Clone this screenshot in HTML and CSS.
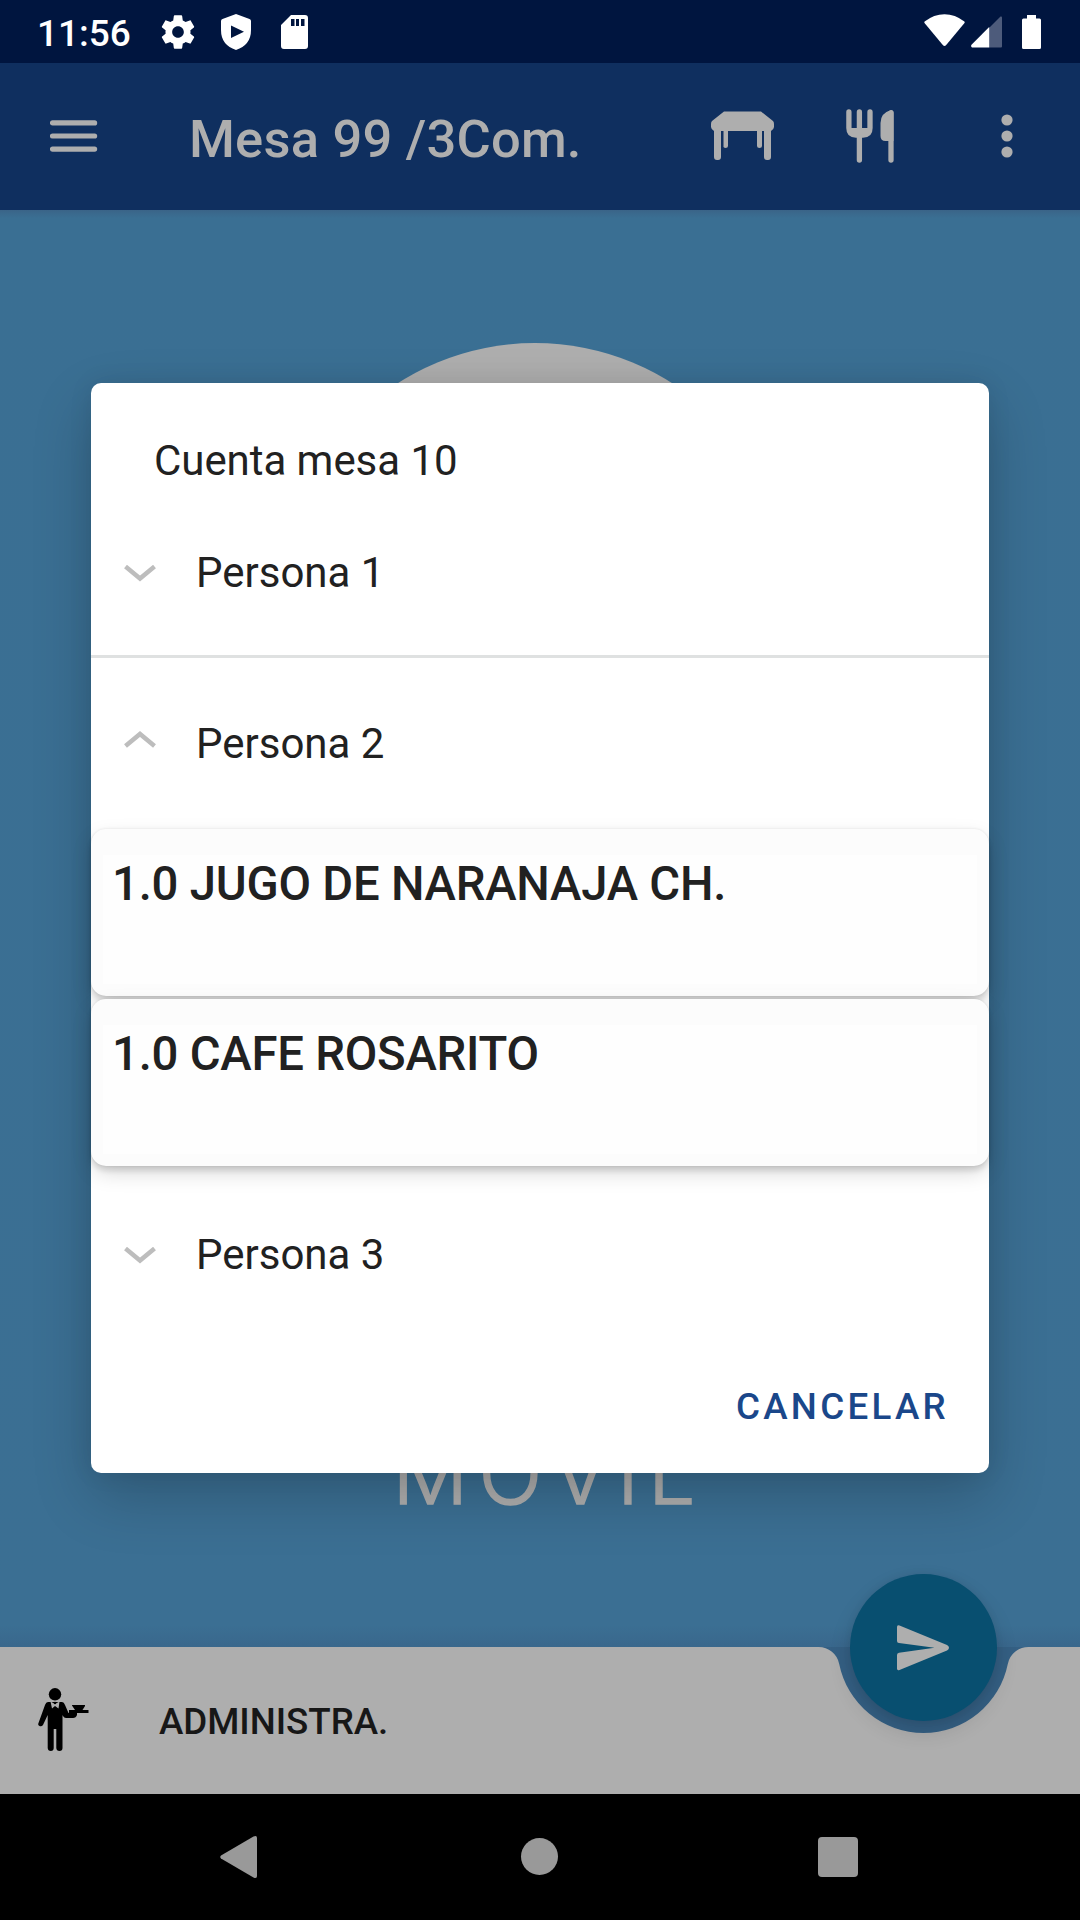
FILE: index.html
```html
<!DOCTYPE html>
<html lang="es">
<head>
<meta charset="UTF-8">
<title>Mesa 99</title>
<link rel="stylesheet" href="styles.css">
</head>
<body>

<div class="screen">

<div class="statusbar">
<span class="clock">11:56</span>
<svg class="gear" width="40" height="40" viewBox="0 0 24 24"><path fill="#fff" d="M19.43 12.98c.04-.32.07-.64.07-.98s-.03-.66-.07-.98l2.11-1.65c.19-.15.24-.42.12-.64l-2-3.46c-.12-.22-.39-.3-.61-.22l-2.49 1c-.52-.4-1.08-.73-1.69-.98l-.38-2.65C14.46 2.18 14.25 2 14 2h-4c-.25 0-.46.18-.49.42l-.38 2.65c-.61.25-1.17.59-1.69.98l-2.49-1c-.23-.09-.49 0-.61.22l-2 3.46c-.13.22-.07.49.12.64l2.11 1.65c-.04.32-.07.65-.07.98s.03.66.07.98l-2.11 1.65c-.19.15-.24.42-.12.64l2 3.46c.12.22.39.3.61.22l2.49-1c.52.4 1.08.73 1.69.98l.38 2.65c.03.24.24.42.49.42h4c.25 0 .46-.18.49-.42l.38-2.65c.61-.25 1.17-.59 1.69-.98l2.49 1c.23.09.49 0 .61-.22l2-3.46c.12-.22.07-.49-.12-.64l-2.11-1.65zM12 15.5c-1.93 0-3.5-1.57-3.5-3.5s1.57-3.5 3.5-3.5 3.5 1.57 3.5 3.5-1.57 3.5-3.5 3.5z"/></svg>
<svg class="shield" width="30" height="36" viewBox="0 0 30 36"><path fill="#fff" fill-rule="evenodd" d="M15 0L28.500 5Q30 5.600 30 7V16Q30 31 15 36Q0 31 0 16V7Q0 5.600 1.500 5ZM10 11.500V24L23 17.700Z"/></svg>
<svg class="sd" width="27" height="34" viewBox="0 0 27 34"><path fill="#fff" fill-rule="evenodd" d="M10 0H24Q27 0 27 3V31Q27 34 24 34H3Q0 34 0 31V10ZM10 4V11H13.500V4ZM15 4V11H18V4ZM20 4V11H23.500V4Z"/></svg>
<span class="spacer"></span>
<svg class="wifi" width="41" height="33" viewBox="0 0 41 33"><path fill="#fff" d="M.6 7.500Q10 .2 20.500 .2T40.400 7.500Q41 8.300 40.500 9L22 31.200Q20.500 32.800 19 31.200L.5 9Q0 8.300 .6 7.500Z"/></svg>
<svg class="signal" width="31" height="32" viewBox="0 0 31 32"><path fill="#4d5b7b" d="M18 12L29.500.500Q31 0 31 1.500V30.500Q31 31.500 30 31.500H18Z"/><path fill="#fff" d="M18.200 11V31.500H1Q-.6 30.500.500 28.700Z"/></svg>
<svg class="battery" width="19" height="34" viewBox="0 0 19 34"><path fill="#fff" d="M5 0H14V3.500H17.500Q19 3.500 19 5V32.500Q19 34 17.500 34H1.500Q0 34 0 32.500V5Q0 3.500 1.500 3.500H5Z"/></svg>
</div>

<div class="toolbar">
<svg class="burger" width="48" height="32" viewBox="0 0 48 32"><path stroke="#aeaeae" stroke-width="5.200" stroke-linecap="round" d="M2.500 2.900H44.600M2.500 16H44.600M2.500 29.100H44.600"/></svg>
<h1>Mesa 99 /3Com.</h1>
<span class="spacer"></span>
<svg class="table" width="63" height="50" viewBox="0 0 63 50"><path fill="#aeaeae" d="M13 .5H50L62 10Q63 11 63 13V16Q63 18 60 20V46Q60 49 57 49H56Q53 49 53 46V20H51V35Q51 37 48.500 37T46 35V20H17V35Q17 37 14.500 37T12.500 35V20H10V46Q10 49 7 49H6Q3 49 3 46V20Q0 18 0 16V13Q0 11 1 10Z"/></svg>
<svg class="cutlery" width="48" height="54" viewBox="0 0 48 54"><path fill="none" stroke="#aeaeae" stroke-width="5.300" stroke-linecap="round" d="M2.900 3V19Q2.900 26 10 26H17Q24 26 24 19V3M13.400 3V51M45 4V51"/><path fill="#aeaeae" d="M4 19H23V22L19 27H8L4 22ZM47.500 3.500Q47.500 1 45 1Q34.500 4 34.500 14V27Q34.500 32 39.500 32H47.500Z"/></svg>
<svg class="more" width="12" height="44" viewBox="0 0 12 44"><g fill="#aeaeae"><circle cx="6" cy="6" r="5.600"/><circle cx="6" cy="22" r="5.600"/><circle cx="6" cy="38" r="5.600"/></g></svg>
</div>

<div class="content">
<div class="logo"></div>
<svg class="brand" width="320" height="80" viewBox="0 0 320 80"><text x="1.500 87.500 161 226 257" y="69.500">MOVIL</text></svg>
</div>

<div class="bottombar">
<svg class="cradle" width="1080" height="147" viewBox="0 0 1080 147"><path fill="#aeaeae" d="M0 0H818.600A21 21 0 0 1 839.200 16.900A86 86 0 0 0 1007.800 16.900A21 21 0 0 1 1028.400 0H1080V147H0Z"/></svg>
<svg class="waiter" width="51" height="64" viewBox="0 0 51 64">
<circle cx="17" cy="6.300" r="6.200"/>
<path d="M10 14H24Q26 14 27 17L30.500 25H31V22H37L34 17.500V17H47V18L44.500 22H50.500V25H39V27Q38 30 35 30H28Q26 30 25 28L24.500 27V60Q24.500 63 21.500 63T18.300 60V41H15.700V60Q15.700 63 12.800 63T9.700 60V27L5 37Q3.500 39 1.500 38T.5 35L7 17Q8 14 10 14Z"/>
<path fill="#aeaeae" d="M12.500 13.500L17 16L21.500 13.500L20.500 20.500L17 18L14 20.500Z"/>
<circle cx="17" cy="15" r="1.200"/>
</svg>
<span class="user">ADMINISTRA.</span>
<div class="fab"><svg width="52" height="46" viewBox="0 0 52 46"><path fill="#aeaeae" d="M0 2Q0-.5 2.500.5L50 20Q52 21 52 22.800T50 25.500L2.500 45Q0 46 0 43.500V30Q0 28 2 27.800L37.500 22.800L2 18Q0 17.800 0 16Z"/></svg></div>
</div>

<div class="navbar">
<svg width="37" height="42" viewBox="0 0 37 42"><path fill="#999" d="M1 19.500L33.500.5Q37-1 37 2V40Q37 43 33.500 41.500L1 22.500Q-.5 21 1 19.500Z"/></svg>
<div class="home"></div>
<div class="recent"></div>
</div>

<div class="dialog">
<h2>Cuenta mesa 10</h2>
<div class="person line">
<svg width="32" height="18" viewBox="0 0 32 18"><path d="M1.500 1.500L16 13.500L30.500 1.500"/></svg>
<span>Persona 1</span>
</div>
<div class="person open">
<svg width="32" height="18" viewBox="0 0 32 18"><path d="M1.500 16L16 4L30.500 16"/></svg>
<span>Persona 2</span>
</div>
<div class="card"><p>1.0 JUGO DE NARANAJA CH.</p></div>
<div class="card"><p>1.0 CAFE ROSARITO</p></div>
<div class="person">
<svg width="32" height="18" viewBox="0 0 32 18"><path d="M1.500 1.500L16 13.500L30.500 1.500"/></svg>
<span>Persona 3</span>
</div>
<div class="actions"><span class="cancel">CANCELAR</span></div>
</div>

</div>

</body>
</html>
```
FILE: styles.css
```css
body {
	margin: 0;
	background-color: #000;
	font-family: Roboto, sans-serif;
	color: #212121;
}

h1, h2, p {
	margin: 0;
}

svg {
	display: block;
	flex: none;
}

.screen {
	position: relative;
	display: flex;
	flex-direction: column;
	width: 1080px;
	height: 1920px;
	overflow: hidden;
}

.spacer {
	flex: 1;
}

/* status bar */
.statusbar {
	display: flex;
	align-items: center;
	box-sizing: border-box;
	height: 63px;
	padding: 0 39px 0 37px;
	background-color: #00153f;
}

.clock {
	width: 121px;
	padding-top: 4px;
	color: #fff;
	font-size: 37px;
	font-weight: 500;
	line-height: 44px;
}

.shield { margin-left: 23px; }
.sd { margin-left: 30px; }
.wifi { margin: 0 6px 3px 0; }
.signal { margin-right: 20px; }

/* toolbar */
.toolbar {
	display: flex;
	align-items: center;
	box-sizing: border-box;
	height: 147px;
	padding: 0 67px 0 50px;
	background-color: #0f2f5f;
}

.toolbar h1 {
	margin-left: 91px;
	padding-top: 4px;
	color: #aeaeae;
	font-size: 52.5px;
	font-weight: 500;
	letter-spacing: .2px;
	line-height: 62px;
	white-space: nowrap;
}

.burger, .more { margin-bottom: 1px; }
.table { margin-bottom: 2px; }
.cutlery { margin: 0 107px 2px 72px; }

.content {
	display: flex;
	flex-direction: column;
	align-items: center;
	box-sizing: border-box;
	height: 1437px;
	padding-top: 133px;
	background: linear-gradient(#3a6488, #3a6f93 8px, #3b6f93 1415px, #39678c);
}

.logo {
	width: 510px;
	height: 510px;
	margin-right: 10px;
	border-radius: 50%;
	background-color: #aeaeae;
}

.brand {
	margin: 581px 0 0 22px;
	fill: #aeaeae;
	stroke: #aeaeae;
	stroke-width: 1.5;
	font-family: Inter, sans-serif;
	font-size: 84px;
	font-weight: 300;
}

/* bottom bar */
.bottombar {
	position: relative;
	display: flex;
	align-items: center;
	height: 147px;
	padding-left: 38px;
	background-color: #345f83;
}

.cradle {
	position: absolute;
	left: 0;
	top: 0;
}

.waiter {
	position: relative;
	margin-top: -2px;
}

.user {
	position: relative;
	margin-left: 70px;
	padding-top: 2px;
	color: #171717;
	font-size: 36.75px;
	font-weight: 500;
	letter-spacing: -.05px;
	line-height: 44px;
}

.fab {
	position: absolute;
	left: 850px;
	top: -73px;
	display: flex;
	align-items: center;
	justify-content: center;
	box-sizing: border-box;
	width: 147px;
	height: 147px;
	padding-right: 2px;
	border-radius: 50%;
	background-color: #084f70;
	box-shadow: 0 10px 22px rgba(0, 0, 0, .14), 0 0 8px rgba(0, 0, 0, .06);
}

/* system navigation */
.navbar {
	display: flex;
	align-items: center;
	justify-content: space-between;
	box-sizing: border-box;
	height: 126px;
	padding: 0 222px 0 220px;
	background-color: #000;
}

.home {
	width: 37px;
	height: 37px;
	margin: 0 0 1px 4px;
	border-radius: 50%;
	background-color: #999;
}

.recent {
	width: 40px;
	height: 40px;
	border-radius: 4px;
	background-color: #999;
}

/* account dialog */
.dialog {
	position: absolute;
	left: 91px;
	top: 383px;
	width: 898px;
	height: 1090px;
	border-radius: 10px;
	background-color: #fff;
	box-shadow: 0 24px 60px rgba(0, 0, 0, .2), 0 0 24px rgba(0, 0, 0, .08);
}

.dialog h2 {
	height: 51px;
	padding: 53px 0 0 63px;
	font-size: 42px;
	font-weight: 400;
	letter-spacing: -.05px;
	line-height: 50px;
}

.person {
	display: flex;
	align-items: center;
	height: 168px;
	padding-left: 33px;
	border-bottom: 3px solid transparent;
	font-size: 42px;
}

.person svg {
	margin-top: 6px;
}

.person.open svg {
	margin: 0 0 6px;
}

.person span {
	margin-left: 40px;
	padding-top: 2px;
}

.person path {
	fill: none;
	stroke: #bdbdbd;
	stroke-width: 4.5;
}

.line {
	border-color: #dfe1e1;
}

.card {
	box-sizing: border-box;
	height: 167px;
	margin-bottom: 3px;
	padding: 26px 12px 12px;
	border-radius: 15px;
	background-color: #fcfcfc;
	box-shadow: 0 5px 5px rgba(0, 0, 0, .1), 0 8px 22px -3px rgba(0, 0, 0, .18), 0 0 3px rgba(0, 0, 0, .1);
}

.card p {
	height: 129px;
	padding-left: 9px;
	background-color: #fefefe;
	font-size: 47.25px;
	font-weight: 500;
	letter-spacing: -.22px;
	line-height: 58px;
}

.actions {
	display: flex;
	justify-content: flex-end;
	padding: 45px 40px 0 0;
}

.cancel {
	color: #1a478a;
	font-size: 36.75px;
	font-weight: 500;
	letter-spacing: 3.28px;
	line-height: 44px;
}
```
